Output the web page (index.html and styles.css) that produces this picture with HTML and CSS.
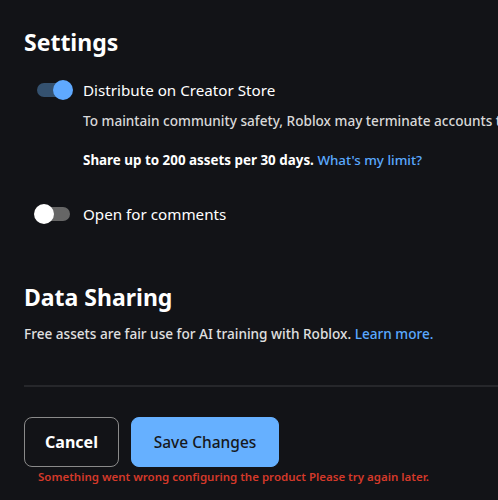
FILE: index.html
```html
<!DOCTYPE html>
<html lang="en">
<head>
  <meta charset="UTF-8" />
  <meta name="viewport" content="width=device-width, initial-scale=1.0"/>
  <title>Configure Asset</title>
  <link rel="stylesheet" href="styles.css">
</head>
<body>
  <main class="page">
    <!-- SETTINGS -->
    <section class="section">
      <h2 class="section-title">Settings</h2>

      <div class="toggle-row">
        <span class="switch switch-on"><span class="knob"></span></span>
        <span class="toggle-label">Distribute on Creator Store</span>
      </div>
      <div class="toggle-details">
        <p class="hint">To maintain community safety, Roblox may terminate accounts that abuse distribution.</p>
        <p class="limit"><strong>Share up to 200 assets per 30 days.</strong> <a href="#" class="link">What's my limit?</a></p>
      </div>

      <div class="toggle-row toggle-row-last">
        <span class="switch"><span class="knob"></span></span>
        <span class="toggle-label">Open for comments</span>
      </div>
    </section>

    <!-- DATA SHARING -->
    <section class="section">
      <h2 class="section-title">Data Sharing</h2>
      <p class="text">Free assets are fair use for AI training with Roblox. <a href="#" class="link">Learn more.</a></p>
    </section>

    <hr class="divider">

    <div class="actions">
      <button class="btn btn-cancel">Cancel</button>
      <button class="btn btn-save">Save Changes</button>
    </div>
    <p class="error">Something went wrong configuring the product Please try again later.</p>
  </main>
</body>
</html>
```

FILE: styles.css
```css
html, body {
  margin: 0;
  background: #121317;
  overflow: hidden;
}

body {
  font-family: "Noto Sans", "Open Sans", Arial, sans-serif;
  color: #f2f2f2;
}

.page {
  padding: 26px 0 0 24px;
}

.section-title {
  margin: 0;
  font-size: 23px;
  font-weight: 700;
  line-height: 32px;
  color: #ffffff;
}

.toggle-row {
  display: flex;
  align-items: center;
  gap: 13px;
  margin-top: 20px;
  padding-left: 10px;
  height: 24px;
}

.toggle-row-last {
  margin-top: 33px;
  margin-bottom: 55px;
}

.toggle-label {
  font-size: 15.2px;
  color: #ffffff;
}

.switch {
  position: relative;
  width: 36px;
  height: 24px;
  flex-shrink: 0;
}

.switch::before {
  content: "";
  position: absolute;
  left: 3px;
  right: 0;
  top: 5px;
  height: 14px;
  border-radius: 7px;
  background: #666666;
}

.switch .knob {
  position: absolute;
  top: 2px;
  left: 0;
  width: 20px;
  height: 20px;
  border-radius: 50%;
  background: #ffffff;
}

.switch-on::before {
  background: #34516f;
}

.switch-on .knob {
  left: auto;
  right: -3px;
  background: #5fa9ff;
}

.toggle-details {
  padding-left: 59px;
}

.hint {
  margin: 9px 0 0;
  font-size: 13.6px;
  font-weight: 500;
  color: #d9d9d9;
  white-space: nowrap;
}

.limit {
  margin: 21px 0 0;
  font-size: 13.4px;
  color: #ffffff;
}

.limit strong {
  font-weight: 700;
}

.link {
  color: #5aa9ff;
  text-decoration: none;
  font-weight: 500;
}

.text {
  margin: 11px 0 0;
  font-size: 13.6px;
  font-weight: 500;
  color: #e0e0e0;
}

.divider {
  margin: 42px 0 0;
  border: 0;
  border-top: 2px solid #26272b;
}

.actions {
  display: flex;
  gap: 12px;
  margin-top: 30px;
}

.btn {
  height: 50px;
  border-radius: 8px;
  font-family: inherit;
  font-size: 16px;
  font-weight: 600;
  cursor: pointer;
}

.btn-cancel {
  width: 95px;
  background: transparent;
  border: 1px solid #8a8a8a;
  color: #ffffff;
  font-weight: 700;
}

.btn-save {
  width: 148px;
  background: #66b0ff;
  border: 1px solid #66b0ff;
  color: #16181c;
  font-size: 15.5px;
  font-weight: 500;
}

.error {
  margin: 2px 0 0 14px;
  font-size: 11.5px;
  font-weight: 600;
  color: #d4392a;
}
```
